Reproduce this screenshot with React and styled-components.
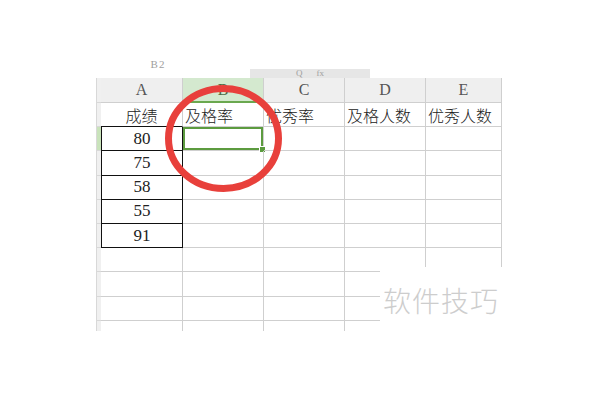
import React from 'react'
import styled, { createGlobalStyle } from 'styled-components';

const Global = createGlobalStyle`
  html, body {
    margin: 0;
    padding: 0;
    background: #ffffff;
  }
  body {
    width: 600px;
    height: 400px;
    overflow: hidden;
    font-family: "Noto Sans CJK SC", sans-serif;
  }
`

const Page = styled.div`
    padding-left: 96px;
    padding-top: 58px;
    display: flex;
    flex-direction: column;
`

const FormulaBar = styled.div`
    display: flex;
    height: 20px;
    width: 406px;
`

const NameBox = styled.div`
    width: 154px;
    display: flex;
    justify-content: center;
    align-items: flex-end;
    padding-right: 30px;
    padding-bottom: 8px;
    box-sizing: border-box;
`

const FaintText = styled.span`
    font-family: "Liberation Serif", serif;
    font-size: ${p => p.$size || '11px'};
    line-height: ${p => p.$size || '11px'};
    color: #a0a0a0;
    letter-spacing: ${p => p.$spacing || '0px'};
`

const Tab = styled.div`
    margin-top: 11px;
    width: 120px;
    height: 9px;
    background: #e6e6e6;
    display: flex;
    justify-content: center;
    align-items: center;
    gap: 14px;
`

const Sheet = styled.div`
    position: relative;
    display: grid;
    grid-template-columns: 5px 82px 81px 81px 81px 76px;
    grid-template-rows: 25px repeat(9, 24.2px) 10px;
    width: 406px;
`

const Cell = styled.div`
    box-sizing: border-box;
    position: relative;
    display: flex;
    align-items: center;
    justify-content: ${p => p.$align === 'left' ? 'flex-start' : 'center'};
    padding-left: ${p => p.$align === 'left' ? '2px' : '0'};
    white-space: nowrap;
    overflow: visible;
    border-right: 1px solid ${p => p.$blackRight ? '#111' : '#cfcfcf'};
    border-bottom: ${p => p.$last ? '0' : `1px solid ${p.$blackBottom ? '#111' : '#cfcfcf'}`};
    border-left: ${p => p.$blackLeft ? '1px solid #111' : '0'};
    background: ${p => p.$bg || 'transparent'};
    font-family: ${p => p.$num ? '"Liberation Serif", serif' : '"Noto Sans CJK SC", sans-serif'};
    font-size: ${p => p.$num ? '17px' : '16px'};
    font-weight: 300;
    color: #222;
    ${p => p.$selected && `
        box-shadow: inset 0 0 0 2px #5c9b3f;
        &::after {
            content: '';
            position: absolute;
            right: -3px;
            bottom: -3px;
            width: 5px;
            height: 5px;
            background: #5c9b3f;
            border: 1px solid #fff;
        }
    `}
`

const HeadCell = styled(Cell)`
    background: ${p => p.$active ? '#d4e9cf' : '#efefef'};
    border-bottom: ${p => p.$active ? '2px solid #6aa84f' : '1px solid #cfcfcf'};
    font-family: "Liberation Serif", serif;
    font-size: 16px;
    color: ${p => p.$active ? '#4d6b45' : '#555'};
`

const Strip = styled.div`
    box-sizing: border-box;
    border-left: 1px solid #d8d8d8;
    border-bottom: ${p => p.$last ? '0' : '1px solid #d8d8d8'};
    background: ${p => p.$active ? '#c9e3bb' : '#f0f0f0'};
`

const Circle = styled.svg`
    position: absolute;
    left: 69px;
    top: 7px;
    width: 117px;
    height: 107px;
    pointer-events: none;
`

const Watermark = styled.div`
    position: absolute;
    left: 284px;
    top: 189px;
    width: 130px;
    height: 70px;
    background: #ffffff;
    display: flex;
    align-items: center;
    padding-left: 3px;
    padding-bottom: 4px;
    box-sizing: border-box;
    font-family: "Noto Sans CJK SC", sans-serif;
    font-size: 28px;
    font-weight: 300;
    color: #cdcdcd;
    letter-spacing: 1px;
`

const letters = ['A', 'B', 'C', 'D', 'E']
const titles = ['成绩', '及格率', '优秀率', '及格人数', '优秀人数']
const scores = ['80', '75', '58', '55', '91']

const App = () => {
    const rows = []
    for (let r = 0; r < 10; r++) rows.push(r)

    return (
        <>
            <Global />
            <Page>
                <FormulaBar>
                    <NameBox><FaintText $spacing="1px">B2</FaintText></NameBox>
                    <Tab>
                        <FaintText $size="9px">Q</FaintText>
                        <FaintText $size="9px">fx</FaintText>
                    </Tab>
                </FormulaBar>
                <Sheet>
                    <Strip />
                    {letters.map((l) => (
                        <HeadCell key={l} $active={l === 'B'}>{l}</HeadCell>
                    ))}
                    {rows.map((r) => {
                        const last = r === 9
                        const inScores = r >= 1 && r <= 5
                        return (
                            <React.Fragment key={r}>
                                <Strip $active={r === 1} $last={last} />
                                <Cell
                                    $last={last}
                                    $num={inScores}
                                    $blackLeft={inScores}
                                    $blackRight={inScores}
                                    $blackBottom={r <= 5}
                                >
                                    {r === 0 ? titles[0] : inScores ? scores[r - 1] : ''}
                                </Cell>
                                {letters.slice(1).map((l, i) => (
                                    <Cell
                                        key={l}
                                        $last={last}
                                        $align="left"
                                        $selected={r === 1 && l === 'B'}
                                    >
                                        {r === 0 ? titles[i + 1] : ''}
                                    </Cell>
                                ))}
                            </React.Fragment>
                        )
                    })}
                    <Circle viewBox="0 0 117 107">
                        <ellipse cx="58.5" cy="53.5" rx="55" ry="50" fill="none" stroke="#e8403b" strokeWidth="7" />
                    </Circle>
                    <Watermark>软件技巧</Watermark>
                </Sheet>
            </Page>
        </>
    )
}

export default App
